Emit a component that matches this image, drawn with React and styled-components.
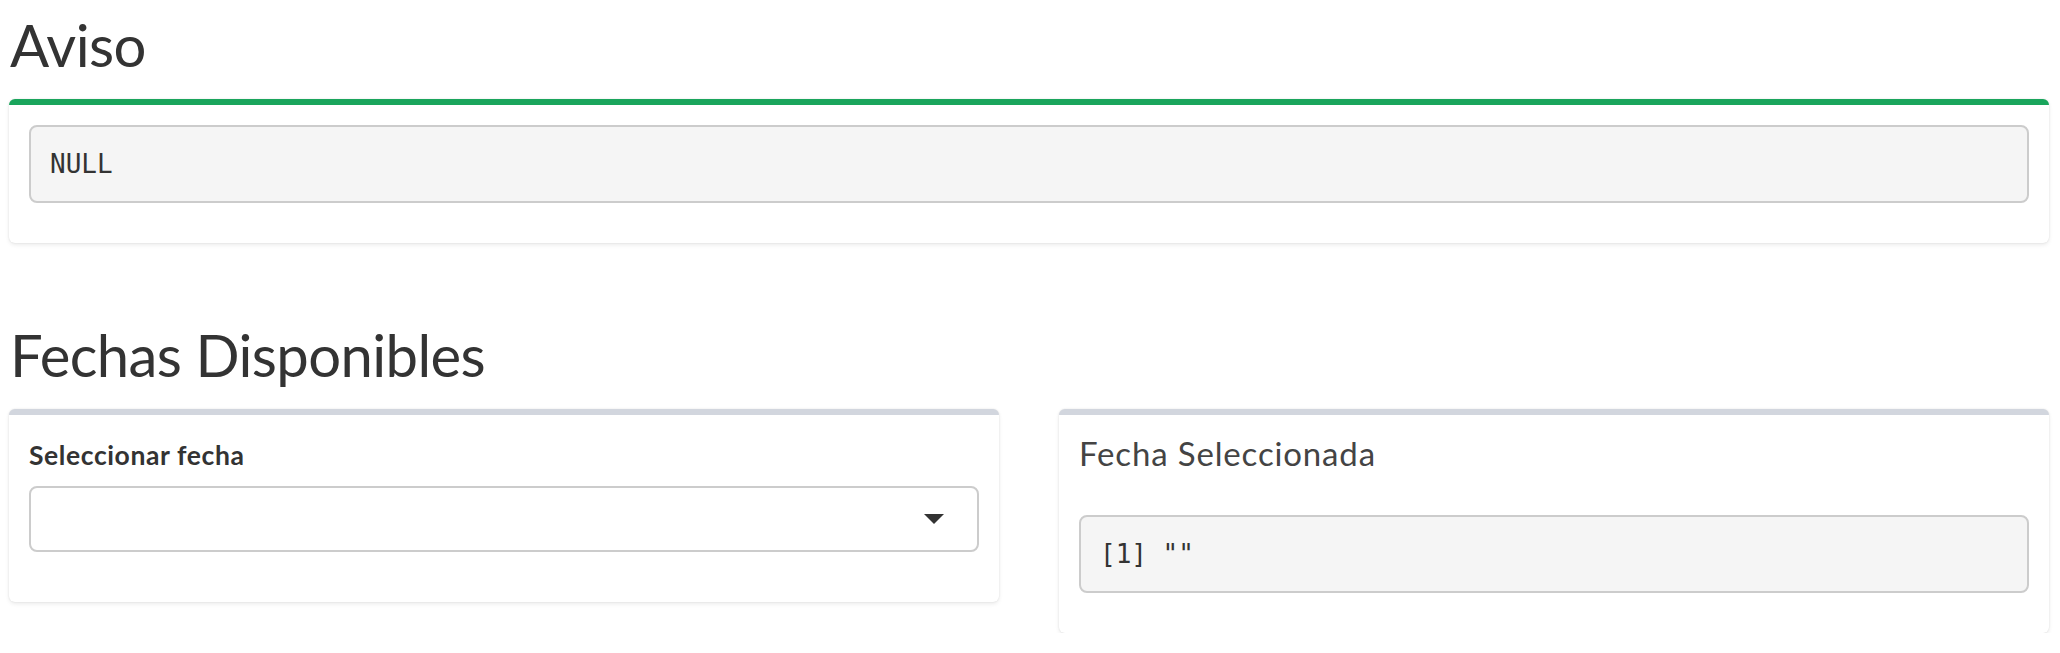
import React from "react";
import styled, { createGlobalStyle } from "styled-components";

const GlobalStyle = createGlobalStyle`
  html, body {
    margin: 0;
    padding: 0;
    background: #ffffff;
  }
  body {
    font-family: Lato, "Noto Sans", sans-serif;
    color: #333333;
  }
  * { box-sizing: border-box; }
`;

const Page = styled.div`
  padding: 0 11px 0 9px;
  width: 2060px;
`;

const Section = styled.section`
  margin-top: ${(p) => p.$top}px;
`;

const Heading = styled.h2`
  margin: 0 0 21px 1px;
  font-family: Lato, "Noto Sans", sans-serif;
  font-weight: 400;
  font-size: 58px;
  line-height: 66px;
  color: #333333;
  letter-spacing: -0.6px;
`;

const Row = styled.div`
  display: grid;
  grid-template-columns: 1fr 1fr;
  column-gap: 60px;
  align-items: start;
`;

const Box = styled.div`
  background: #ffffff;
  border-top: 6px solid ${(p) => p.$accent};
  border-radius: 6px;
  box-shadow: 0 0 2px rgba(0, 0, 0, 0.1), 0 2px 4px rgba(0, 0, 0, 0.08);
`;

const BoxHeader = styled.div`
  padding: 18px 20px 22px;
`;

const BoxTitle = styled.h3`
  margin: 0;
  font-family: Lato, "Noto Sans", sans-serif;
  font-weight: 400;
  font-size: 33px;
  line-height: 40px;
  letter-spacing: 0.85px;
  color: #444444;
`;

const BoxBody = styled.div`
  padding: 20px;
`;

const Pre = styled.pre`
  margin: 0 0 20px;
  padding: 19px 19px 18px;
  background: #f5f5f5;
  border: 2px solid #cccccc;
  border-radius: 8px;
  font-family: "DejaVu Sans Mono", "Liberation Mono", monospace;
  font-size: 26px;
  line-height: 37px;
  color: #333333;
  white-space: pre;
`;

const FormGroup = styled.div`
  margin-bottom: 30px;
`;

const Label = styled.label`
  display: block;
  margin-bottom: 11px;
  font-family: Lato, "Noto Sans", sans-serif;
  font-weight: 700;
  font-size: 26.5px;
  line-height: 40px;
  letter-spacing: 0.6px;
  color: #333333;
`;

const Select = styled.div`
  height: 66px;
  border: 2px solid #cccccc;
  border-radius: 8px;
  background: #ffffff;
  display: flex;
  align-items: center;
  justify-content: flex-end;
  padding-right: 33px;
`;

const Caret = styled.span`
  width: 0;
  height: 0;
  border-style: solid;
  border-width: 10px 10px 0 10px;
  border-color: #333333 transparent transparent transparent;
`;

export default function App() {
  return (
    <>
      <GlobalStyle />
      <Page>
        <Section $top={12}>
          <Heading>Aviso</Heading>
          <Box $accent="#1aa55c">
            <BoxBody>
              <Pre>NULL</Pre>
            </BoxBody>
          </Box>
        </Section>
        <Section $top={79}>
          <Heading>Fechas Disponibles</Heading>
          <Row>
            <Box $accent="#d2d6de">
              <BoxBody>
                <FormGroup>
                  <Label>Seleccionar fecha</Label>
                  <Select>
                    <Caret />
                  </Select>
                </FormGroup>
              </BoxBody>
            </Box>
            <Box $accent="#d2d6de">
              <BoxHeader>
                <BoxTitle>Fecha Seleccionada</BoxTitle>
              </BoxHeader>
              <BoxBody>
                <Pre>{'[1] ""'}</Pre>
              </BoxBody>
            </Box>
          </Row>
        </Section>
      </Page>
    </>
  );
}
